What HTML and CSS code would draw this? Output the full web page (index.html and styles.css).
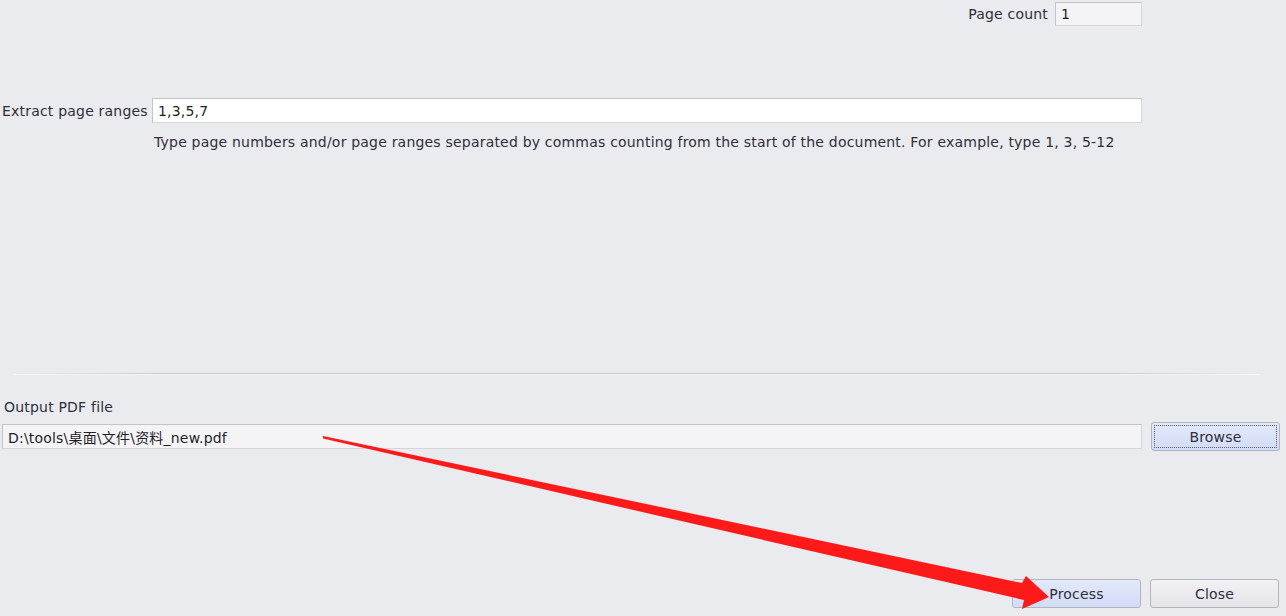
FILE: index.html
```html
<!DOCTYPE html>
<html lang="en">
  <head>
    <meta charset="UTF-8" />
    <title>Extract pages</title>
    <link rel="stylesheet" href="styles.css">
  </head>
  <body>
    <div class="dialog">
      <!-- Page count -->
      <div class="count-row">
        <label class="label">Page count</label>
        <input class="field count-field" type="text" value="1" readonly>
      </div>

      <!-- Ranges -->
      <div class="range-row">
        <label class="label range-label">Extract page ranges</label>
        <input class="field range-field" type="text" value="1,3,5,7">
      </div>
      <p class="hint">Type page numbers and/or page ranges separated by commas counting from the start of the document. For example, type 1, 3, 5-12</p>

      <div class="separator"></div>

      <!-- Output -->
      <div class="output">
        <label class="label">Output PDF file</label>
        <div class="output-row">
          <input class="field output-field" type="text" value="D:\tools\桌面\文件\资料_new.pdf">
          <button class="btn btn-focus">Browse</button>
        </div>
      </div>

      <div class="actions">
        <button class="btn btn-default">Process</button>
        <button class="btn">Close</button>
      </div>
    </div>

    <!-- red annotation arrow -->
    <svg class="arrow" width="1286" height="616" viewBox="0 0 1286 616">
      <polygon fill="#ff1a1a" points="323,436 1022,583 1026,576 1049,597 1022,609 1024,600 323,438.5" />
    </svg>
  </body>
</html>
```
FILE: styles.css
```css
* {
  margin: 0;
  padding: 0;
  box-sizing: border-box;
}

body {
  background-color: #eaebef;
  font-family: "DejaVu Sans", "Noto Sans CJK SC", sans-serif;
  font-size: 14px;
  letter-spacing: 0.2px;
  color: #2f2f3a;
  width: 1286px;
  height: 616px;
  overflow: hidden;
  position: relative;
}

.dialog {
  display: flex;
  flex-direction: column;
  height: 100%;
}

.label {
  white-space: nowrap;
}

.field {
  font-family: inherit;
  font-size: 14px;
  letter-spacing: 0.2px;
  color: #1e1e28;
  border: 1px solid #c3c3c8;
  border-bottom-color: #d6d6da;
  border-right-color: #d6d6da;
  padding: 0 5px;
  outline: none;
}

.count-row {
  display: flex;
  justify-content: flex-end;
  align-items: center;
  gap: 7px;
  padding: 2px 144px 0 0;
}

.count-field {
  width: 87px;
  height: 24px;
  background-color: #f4f4f7;
}

.range-row {
  display: flex;
  align-items: center;
  margin-top: 72px;
  padding-left: 2px;
}

.range-label {
  width: 150px;
}

.range-field {
  width: 990px;
  height: 25px;
  background-color: #fff;
}

.hint {
  margin: 10px 0 0 154px;
  line-height: 18px;
}

.separator {
  margin: 222px 26px 0 14px;
  height: 2px;
  background: linear-gradient(to right, rgba(200,200,206,0) 0%, #c8c8ce 12%, #c8c8ce 88%, rgba(200,200,206,0) 100%);
  border-bottom: 1px solid #f6f6f8;
}

.output {
  margin-top: 23px;
  padding-left: 2px;
}

.output .label {
  display: block;
  padding-left: 2px;
  line-height: 18px;
}

.output-row {
  display: flex;
  align-items: center;
  gap: 9px;
  margin-top: 6px;
}

.output-field {
  width: 1140px;
  height: 25px;
  background-color: #f4f4f7;
}

.btn {
  font-family: inherit;
  font-size: 14px;
  letter-spacing: 0.2px;
  color: #2f2f3a;
  width: 129px;
  height: 29px;
  border: 1px solid #b4b4bb;
  border-radius: 3px;
  background: linear-gradient(#f2f2f5, #e4e4e9);
  cursor: pointer;
}

.btn-focus,
.btn-default {
  background: linear-gradient(#e3e9fb, #d2dcf7);
}

.btn-focus {
  outline: 1px dotted #5a5a66;
  outline-offset: -4px;
}

.actions {
  display: flex;
  justify-content: flex-end;
  gap: 9px;
  margin-top: auto;
  padding: 0 7px 8px 0;
}

.arrow {
  position: absolute;
  left: 0;
  top: 0;
  pointer-events: none;
}
```
